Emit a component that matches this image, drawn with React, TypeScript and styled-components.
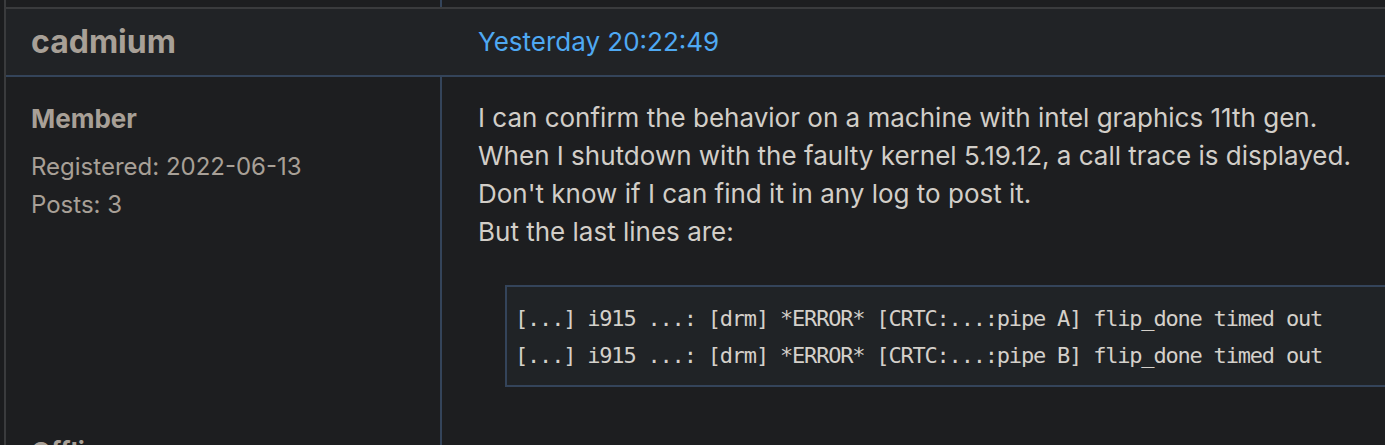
import React from "react";
import styled, { createGlobalStyle } from "styled-components";

const Global = createGlobalStyle`
  html, body { margin: 0; padding: 0; background: #1b1c1e; }
  body { font-family: Inter, "Noto Sans", sans-serif; overflow: hidden; }
`;

const Frame = styled.div`
  margin-left: 4px;
  border-left: 2px solid #3a3b3d;
  width: 1400px;
  background: #1d1e20;
`;

const PrevRow = styled.div`
  display: grid;
  grid-template-columns: 436px 1fr;
  height: 7px;
`;

const PrevCell = styled.div<{ $divider?: boolean }>`
  border-right: ${(p) => (p.$divider ? "2px solid #34445a" : "none")};
`;

const Header = styled.div`
  display: grid;
  grid-template-columns: 436px 1fr;
  align-items: center;
  height: 66px;
  background: #212326;
  border-top: 2px solid #3a3b3d;
  border-bottom: 2px solid #34445a;
`;

const Author = styled.div`
  padding-left: 25px;
  font-size: 32px;
  font-weight: 700;
  color: #a8a097;
  line-height: 1;
  margin-top: -1px;
`;

const DateLink = styled.a`
  padding-left: 36px;
  font-size: 26px;
  color: #4fa9f3;
  text-decoration: none;
  line-height: 1;
  margin-top: -1px;
`;

const Body = styled.div`
  display: grid;
  grid-template-columns: 436px 1fr;
  min-height: 400px;
`;

const UserCol = styled.div`
  border-right: 2px solid #34445a;
  padding: 26px 0 0 25px;
  display: flex;
  flex-direction: column;
  color: #a8a097;
`;

const Title = styled.div`
  font-size: 26px;
  font-weight: 700;
  line-height: 32px;
  margin-bottom: 13px;
`;

const Info = styled.div`
  font-size: 24px;
  line-height: 38px;
`;

const Status = styled.div`
  margin-top: 212px;
  font-size: 26px;
  font-weight: 700;
  line-height: 32px;
`;

const PostCol = styled.div`
  padding: 22px 0 0 36px;
  color: #d2cec8;
`;

const Para = styled.p`
  margin: 0;
  font-size: 26px;
  line-height: 38px;
`;

const Code = styled.pre`
  margin: 34px 0 0 27px;
  border: 2px solid #34445a;
  background: #202326;
  padding: 13px 8px 11px 8px;
  font-family: "DejaVu Sans Mono", "Liberation Mono", monospace;
  font-size: 22px;
  letter-spacing: -1.2px;
  line-height: 37px;
  color: #d4d0ca;
  white-space: pre;
`;

export default function App() {
  return (
    <>
      <Global />
      <Frame>
        <PrevRow>
          <PrevCell $divider />
          <PrevCell />
        </PrevRow>
        <Header>
          <Author>cadmium</Author>
          <DateLink href="#">Yesterday 20:22:49</DateLink>
        </Header>
        <Body>
          <UserCol>
            <Title>Member</Title>
            <Info>Registered: 2022-06-13</Info>
            <Info>Posts: 3</Info>
            <Status>Offline</Status>
          </UserCol>
          <PostCol>
            <Para>
              I can confirm the behavior on a machine with intel graphics 11th gen.
              <br />
              When I shutdown with the faulty kernel 5.19.12, a call trace is displayed.
              <br />
              Don't know if I can find it in any log to post it.
              <br />
              But the last lines are:
            </Para>
            <Code>
              {"[...] i915 ...: [drm] *ERROR* [CRTC:...:pipe A] flip_done timed out\n[...] i915 ...: [drm] *ERROR* [CRTC:...:pipe B] flip_done timed out"}
            </Code>
          </PostCol>
        </Body>
      </Frame>
    </>
  );
}
